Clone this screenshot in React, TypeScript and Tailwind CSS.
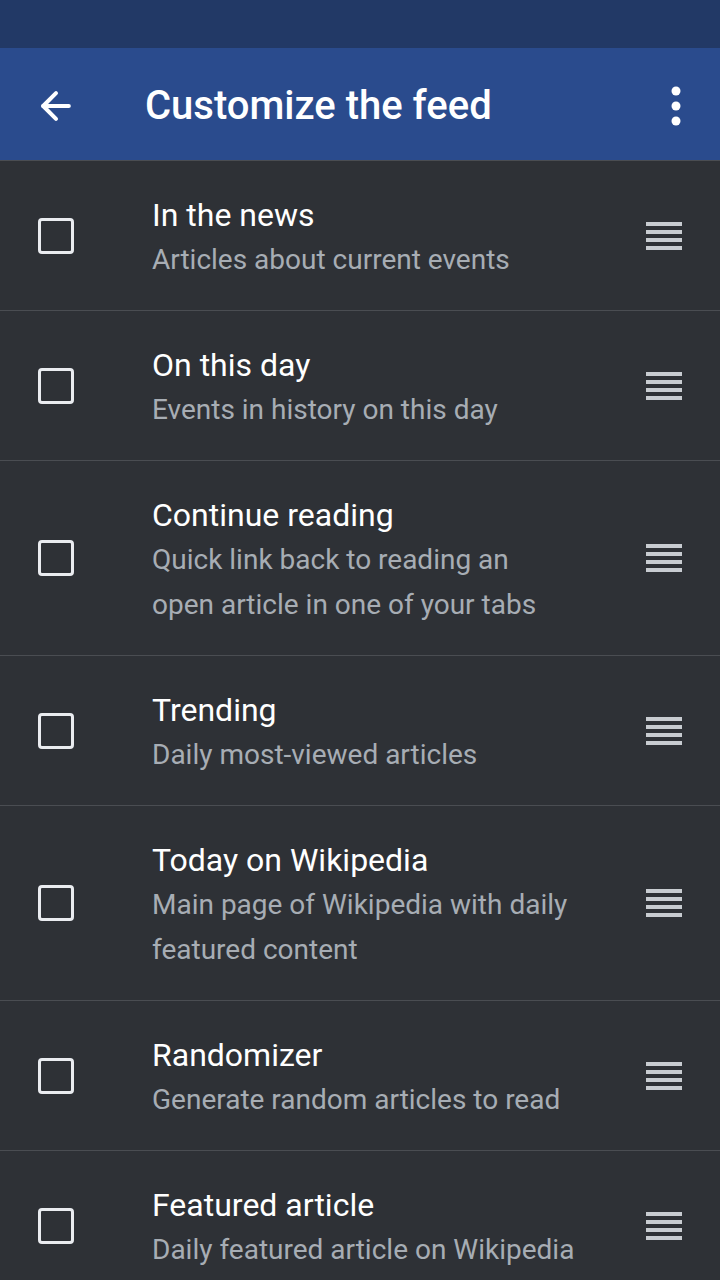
import { ArrowLeft } from "lucide-react";

interface FeedItem {
  title: string;
  lines: string[];
}

const items: FeedItem[] = [
  { title: "In the news", lines: ["Articles about current events"] },
  { title: "On this day", lines: ["Events in history on this day"] },
  {
    title: "Continue reading",
    lines: ["Quick link back to reading an", "open article in one of your tabs"],
  },
  { title: "Trending", lines: ["Daily most-viewed articles"] },
  {
    title: "Today on Wikipedia",
    lines: ["Main page of Wikipedia with daily", "featured content"],
  },
  { title: "Randomizer", lines: ["Generate random articles to read"] },
  { title: "Featured article", lines: ["Daily featured article on Wikipedia"] },
];

const DragHandle = () => (
  <div className="flex w-9 flex-col gap-1">
    <div className="h-1 bg-[#c8ccd1]" />
    <div className="h-1 bg-[#c8ccd1]" />
    <div className="h-1 bg-[#c8ccd1]" />
    <div className="h-1 bg-[#c8ccd1]" />
  </div>
);

const FeedRow = ({ item }: { item: FeedItem }) => (
  <div className="flex items-center border-b border-[#4a4d52] py-[30px] pr-[38px] pl-[38px]">
    <div className="h-9 w-9 shrink-0 rounded-[4px] border-[3px] border-[#eaecf0]" />
    <div className="mt-[2px] mb-[-2px] ml-[78px] flex-grow">
      <div className="text-[32px] leading-[44px] text-white">{item.title}</div>
      {item.lines.map((line) => (
        <div key={line} className="text-[28px] leading-[45px] text-[#a7adb4]">
          {line}
        </div>
      ))}
    </div>
    <DragHandle />
  </div>
);

export default function App() {
  return (
    <div className="h-[1280px] w-[720px] overflow-hidden bg-[#2e3136] font-['Roboto',sans-serif]">
      <div className="h-12 bg-[#223966]" />
      <div className="flex h-[112px] items-center bg-[#2a4b8d] pt-1 pr-[36px] pl-[34px] text-white">
        <ArrowLeft size={44} strokeWidth={2.2} />
        <h1 className="ml-[67px] flex-grow text-[40px] font-medium">Customize the feed</h1>
        <svg width="16" height="44" viewBox="0 0 16 44" fill="white">
          <circle cx="8" cy="7" r="4.5" />
          <circle cx="8" cy="22" r="4.5" />
          <circle cx="8" cy="37" r="4.5" />
        </svg>
      </div>
      <div className="border-t border-[#4a4d52]" />
      {items.map((item) => (
        <FeedRow key={item.title} item={item} />
      ))}
    </div>
  );
}
